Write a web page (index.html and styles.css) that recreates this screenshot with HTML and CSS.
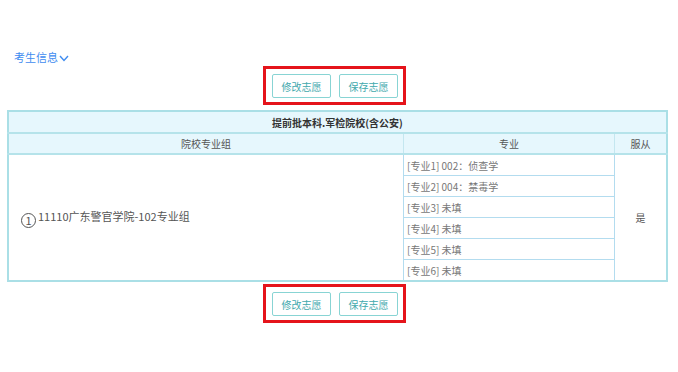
FILE: index.html
```html
<!DOCTYPE html>
<html lang="zh">
    <head>
        <meta charset="utf-8" />
        <title>志愿填报</title>
        <link rel="stylesheet" href="styles.css">
    </head>
    <body>
        <div class="page">
            <div class="student-info">考生信息<svg class="chevron" width="10" height="7" viewBox="0 0 10 7"><polyline points="1,1 5,5.5 9,1" fill="none" stroke="#3f8cf0" stroke-width="1.4"/></svg></div>

            <div class="actions">
                <div class="action-box">
                    <button class="btn">修改志愿</button>
                    <button class="btn">保存志愿</button>
                </div>
            </div>

            <table class="wish-table">
                <tr>
                    <th colspan="3" class="batch">提前批本科.军检院校(含公安)</th>
                </tr>
                <tr class="col-head">
                    <td class="col-group">院校专业组</td>
                    <td class="col-major">专业</td>
                    <td class="col-obey">服从</td>
                </tr>
                <tr>
                    <td rowspan="6" class="group-cell"><span class="num">1</span>11110广东警官学院-102专业组</td>
                    <td class="major">[专业1] 002：侦查学</td>
                    <td rowspan="6" class="obey">是</td>
                </tr>
                <tr><td class="major">[专业2] 004：禁毒学</td></tr>
                <tr><td class="major">[专业3] 未填</td></tr>
                <tr><td class="major">[专业4] 未填</td></tr>
                <tr><td class="major">[专业5] 未填</td></tr>
                <tr><td class="major">[专业6] 未填</td></tr>
            </table>

            <div class="actions bottom">
                <div class="action-box">
                    <button class="btn">修改志愿</button>
                    <button class="btn">保存志愿</button>
                </div>
            </div>
        </div>
    </body>
</html>
```

FILE: styles.css
```css
body {
    margin: 0;
    background: #fff;
    font-family: "Noto Sans CJK SC", "Liberation Sans", sans-serif;
    color: #555;
}

.page {
    padding: 49px 11px 0 7px;
}

.student-info {
    display: flex;
    align-items: center;
    gap: 1px;
    padding-left: 7px;
    font-size: 11px;
    line-height: 17px;
    color: #3f8cf0;
}

.chevron {
    margin-top: 1px;
}

.actions {
    display: flex;
    justify-content: center;
    padding-right: 5px;
}

.actions.bottom {
    margin-top: 2px;
}

.action-box {
    display: flex;
    gap: 8px;
    border: 3px solid #e5141b;
    padding: 5px 5px 4px 6px;
}

.btn {
    width: 59px;
    height: 24px;
    padding: 0;
    background: #fff;
    border: 1px solid #88d4d4;
    border-radius: 2px;
    color: #3fa9ad;
    font-family: "Noto Sans CJK SC", sans-serif;
    font-size: 10px;
}

.wish-table {
    width: 661px;
    margin-top: 5px;
    border-collapse: collapse;
    border: 2px solid #aadfe6;
    font-size: 10px;
}

.wish-table td,
.wish-table th {
    padding: 0;
}

.batch {
    height: 20px;
    background: #e6f7fd;
    border-bottom: 2px solid #b5e3ea;
    font-size: 10px;
    font-weight: bold;
    color: #333;
}

.col-head td {
    height: 19px;
    background: #e6f7fd;
    text-align: center;
    color: #555;
    border-bottom: 2px solid #b5e3ea;
}

.col-group {
    width: 394px;
}

.col-major {
    width: 210px;
    border-left: 1px solid #c4e7f0;
    border-right: 1px solid #c4e7f0;
}

.group-cell {
    padding-left: 12px !important;
    font-size: 11px;
    color: #555;
}

.num {
    display: inline-flex;
    align-items: center;
    justify-content: center;
    width: 15px;
    height: 15px;
    margin-right: 2px;
    border: 1px solid #555;
    border-radius: 50%;
    font-size: 11px;
    line-height: 1;
    vertical-align: -4px;
    box-sizing: border-box;
}

.major {
    height: 20px;
    padding-left: 3px !important;
    border: 1px solid #b3dcef;
    color: #777;
}

.obey {
    text-align: center;
    color: #555;
}
```
